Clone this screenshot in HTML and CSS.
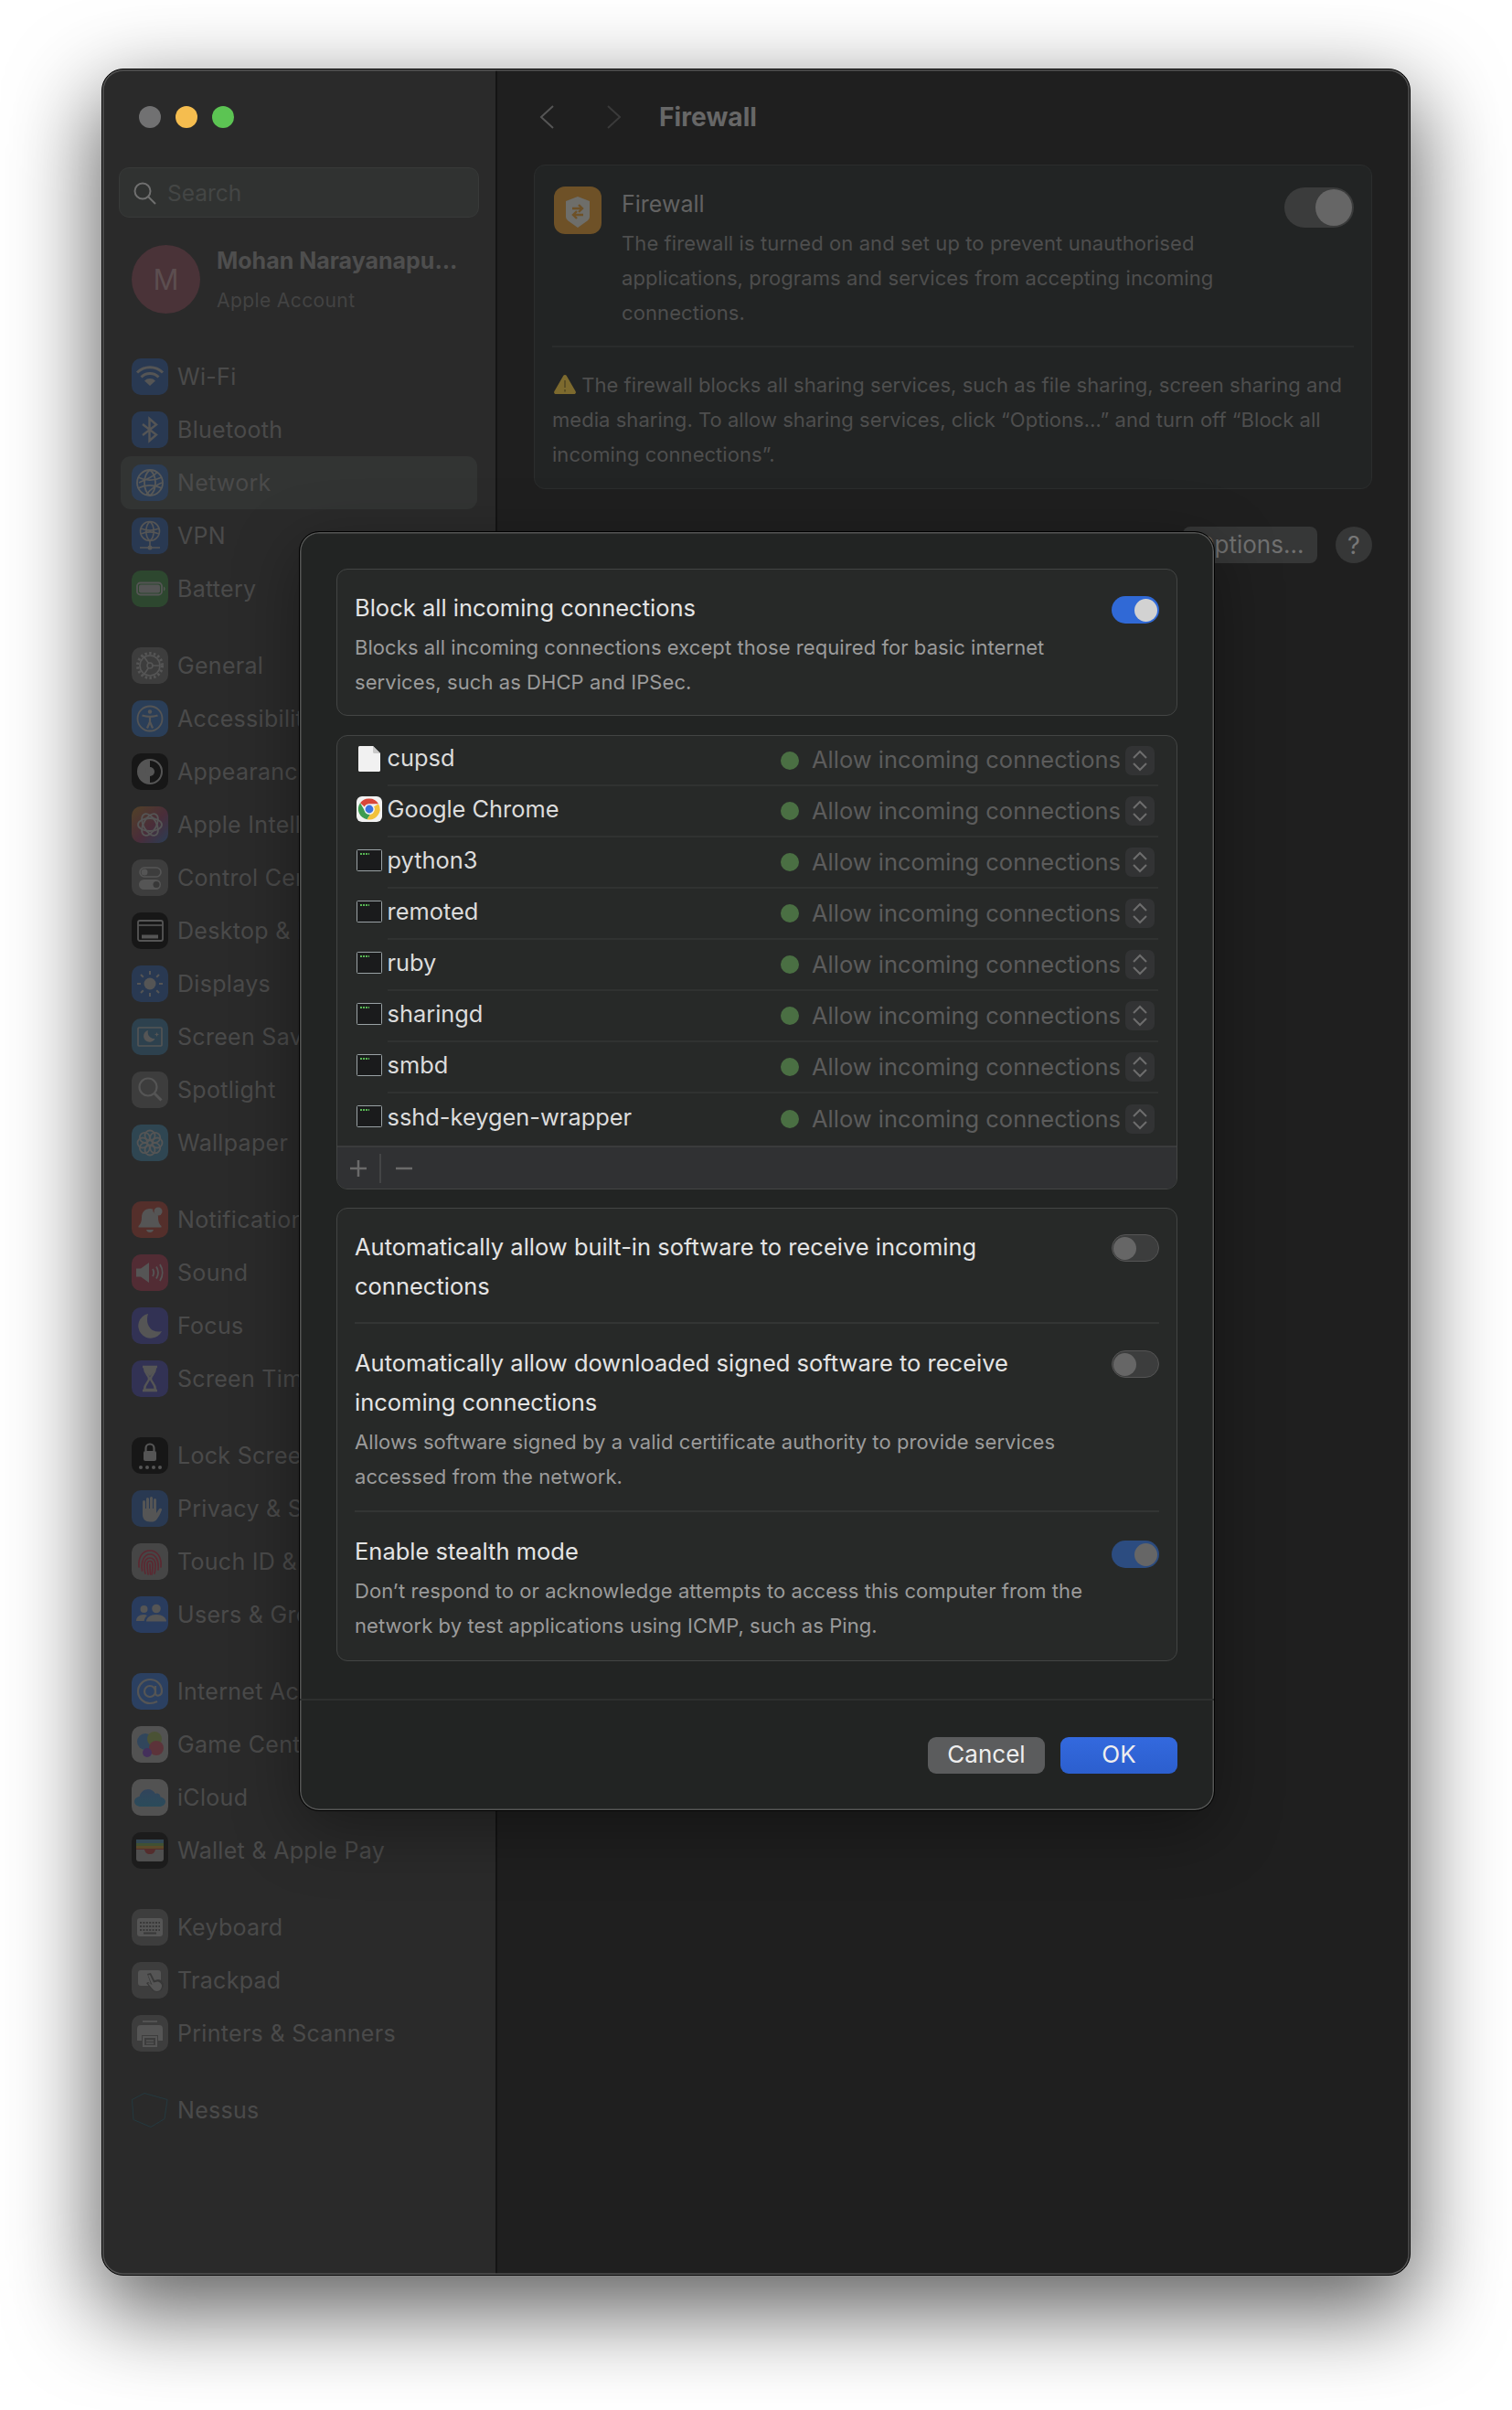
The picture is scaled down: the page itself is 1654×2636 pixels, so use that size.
FILE: index.html
```html
<!DOCTYPE html>
<html lang="en">
<head>
<meta charset="utf-8">
<title>Firewall</title>
<link rel="stylesheet" href="styles.css">
</head>
<body>
<div class="window">
  <aside class="sidebar">
    <div class="lights"><i class="light grey"></i><i class="light yellow"></i><i class="light green"></i></div>
    <div class="search">
      <svg class="search-ico" viewBox="0 0 26 26"><circle cx="11" cy="11" r="8.5"/><path d="M17 17l8 8"/></svg>
      <span>Search</span>
    </div>
    <div class="account">
      <div class="avatar">M</div>
      <div class="account-text"><div class="account-name">Mohan Narayanapu...</div><div class="account-sub">Apple Account</div></div>
    </div>

    <div class="group">
      <div class="item"><span class="ico c-blue"><svg viewBox="0 0 40 40"><g class="ln" stroke-width="3"><path d="M6 15.5a20 20 0 0 1 28 0"/><path d="M10.5 20.5a13.5 13.5 0 0 1 19 0"/></g><path class="fl" d="M20 30l-6-5.5a8.5 8.5 0 0 1 12 0z"/></svg></span>Wi-Fi</div>
      <div class="item"><span class="ico c-blue"><svg viewBox="0 0 40 40"><path class="ln" stroke-width="2.4" d="M12 14l15 11.5-7.500 6.500V8l7.500 6.500L12 26"/></svg></span>Bluetooth</div>
      <div class="item active"><span class="ico c-blue"><svg viewBox="0 0 40 40"><g class="ln" stroke-width="1.8"><circle cx="20" cy="20" r="14"/><path d="M20 6c-8 6-8 22 0 28M20 6c8 6 8 22 0 28"/><path d="M7 14c8 4 18 4 26 0M7 26c8-4 18-4 26 0M8 20c6-3 18-7 20-12M16 33c4-6 14-12 17-13"/></g></svg></span>Network</div>
      <div class="item"><span class="ico c-blue"><svg viewBox="0 0 40 40"><g class="ln" stroke-width="1.6"><circle cx="20" cy="15" r="10.500"/><path d="M20 4.500c-5.500 4-5.500 17 0 21M20 4.500c5.500 4 5.500 17 0 21M10 12c6 2.500 14 2.500 20 0M10 18c6-2.500 14-2.500 20 0"/><path d="M20 25.500V33M9 33h22"/></g><circle class="fl" cx="20" cy="33" r="2.500"/></svg></span>VPN</div>
      <div class="item"><span class="ico c-green"><svg viewBox="0 0 40 40"><rect class="ln" stroke-width="1.800" x="6" y="13.500" width="27" height="13" rx="3.500"/><rect class="fl" x="8" y="15.500" width="23" height="9" rx="2"/><path class="fl" d="M35 17.500v5c1-.5 1.500-1.500 1.500-2.500s-.5-2-1.500-2.500z"/></svg></span>Battery</div>
    </div>

    <div class="group">
      <div class="item"><span class="ico c-grey"><svg viewBox="0 0 40 40"><circle class="ln" stroke-width="3" stroke-dasharray="2.400 2.400" cx="20" cy="20" r="13.500"/><g class="ln" stroke-width="1.600"><circle cx="20" cy="20" r="11"/><circle cx="20" cy="20" r="3"/><path d="M23 20h8M18.500 17.500L13 9.500M18.500 22.500L13 30.500"/></g></svg></span>General</div>
      <div class="item"><span class="ico c-blue2"><svg viewBox="0 0 40 40"><circle class="ln" stroke-width="1.800" cx="20" cy="20" r="13.500"/><circle class="fl" cx="20" cy="12.500" r="2.200"/><path class="ln" stroke-width="2.200" d="M11.500 16.500c5 1.500 12 1.500 17 0M20 17.500v6M20 23.500l-3 7M20 23.500l3 7"/></svg></span>Accessibility</div>
      <div class="item"><span class="ico c-black"><svg viewBox="0 0 40 40"><circle class="ln" stroke-width="2" cx="20" cy="20" r="13"/><path class="fl" d="M20 7a13 13 0 0 0 0 26z"/><circle class="fl" cx="20" cy="20" r="5"/></svg></span>Appearance</div>
      <div class="item"><span class="ico c-ai"><svg viewBox="0 0 40 40"><g class="ln" stroke-width="1.800"><ellipse cx="20" cy="20" rx="13" ry="7"/><ellipse cx="20" cy="20" rx="13" ry="7" transform="rotate(60 20 20)"/><ellipse cx="20" cy="20" rx="13" ry="7" transform="rotate(120 20 20)"/></g></svg></span>Apple Intelligence</div>
      <div class="item"><span class="ico c-grey"><svg viewBox="0 0 40 40"><rect class="ln" stroke-width="1.600" x="9" y="9" width="23" height="10" rx="5"/><circle class="fl" cx="14" cy="14" r="3.500"/><rect class="fl" x="8" y="22" width="24" height="11" rx="5.500"/><circle cx="27" cy="27.500" r="3.500" fill="#414141"/></svg></span>Control Centre</div>
      <div class="item"><span class="ico c-black"><svg viewBox="0 0 40 40"><rect class="ln" stroke-width="1.800" x="7" y="9" width="27" height="22" rx="2"/><path class="ln" stroke-width="1.600" d="M7 14h27"/><rect class="fl" x="11" y="24.500" width="18" height="4"/></svg></span>Desktop &amp; Dock</div>
      <div class="item"><span class="ico c-blue"><svg viewBox="0 0 40 40"><circle class="fl" cx="20" cy="20" r="6.500"/><path class="ln" stroke-width="2" d="M20 6v4M20 30v4M6 20h4M30 20h4M10 10l2.800 2.800M27.200 27.200L30 30M10 30l2.800-2.800M27.200 12.800L30 10"/></svg></span>Displays</div>
      <div class="item"><span class="ico c-teal"><svg viewBox="0 0 40 40"><rect class="ln" stroke-width="1.600" x="7" y="10" width="26" height="20" rx="1"/><path class="fl" d="M18 13a6.500 6.500 0 1 0 7.500 9 7 7 0 0 1-7.500-9z"/><path class="fl" d="M27.500 15l.7 1.800 1.800.7-1.800.7-.7 1.800-.7-1.800-1.800-.7 1.800-.7z"/></svg></span>Screen Saver</div>
      <div class="item"><span class="ico c-grey"><svg viewBox="0 0 40 40"><circle class="ln" stroke-width="2.200" cx="18" cy="17" r="9.500"/><path class="ln" stroke-width="3" d="M25 24l7.500 7.500"/></svg></span>Spotlight</div>
      <div class="item"><span class="ico c-teal2"><svg viewBox="0 0 40 40"><g class="ln" stroke-width="1.800"><circle cx="20" cy="12" r="5.500"/><circle cx="20" cy="28" r="5.500"/><circle cx="12" cy="20" r="5.500"/><circle cx="28" cy="20" r="5.500"/><circle cx="14.300" cy="14.300" r="5.500"/><circle cx="25.700" cy="14.300" r="5.500"/><circle cx="14.300" cy="25.700" r="5.500"/><circle cx="25.700" cy="25.700" r="5.500"/></g></svg></span>Wallpaper</div>
    </div>

    <div class="group">
      <div class="item"><span class="ico c-red"><svg viewBox="0 0 40 40"><path class="fl" d="M20 8c-5.500 0-9 4-9 9.500 0 5-1.500 7.500-3.500 9.500v1.500h25V27c-2-2-3.500-4.500-3.500-9.500 0-1-.1-2-.4-2.800C24 13 22.500 10.500 23.500 8.800 22.400 8.300 21.200 8 20 8z"/><path class="fl" d="M16 31h8c-.5 2-2 3-4 3s-3.500-1-4-3z"/><circle class="fl" cx="29" cy="11" r="4.500"/></svg></span>Notifications</div>
      <div class="item"><span class="ico c-rose"><svg viewBox="0 0 40 40"><path class="fl" d="M5 15.500h5L19 9v22l-9-6.500H5z"/><path class="ln" stroke-width="1.800" d="M23 16c1.500 2.500 1.500 5.500 0 8M27 13.500c2.500 4 2.500 9 0 13M31 11c3.500 5.500 3.500 12.500 0 18"/></svg></span>Sound</div>
      <div class="item"><span class="ico c-indigo"><svg viewBox="0 0 40 40"><path class="fl" d="M18 7a13.500 13.500 0 1 0 15 19C22 29 14 19 18 7z"/></svg></span>Focus</div>
      <div class="item"><span class="ico c-indigo"><svg viewBox="0 0 40 40"><path class="ln" stroke-width="2.400" d="M12 7h16M12 33h16"/><path class="ln" stroke-width="2.400" d="M14 8c0 7 5 8 5 12s-5 5-5 12h12c0-7-5-8-5-12s5-5 5-12z"/><path class="fl" d="M14.500 9h11c-.5 4-3.500 6-5.500 8.500-2-2.500-5-4.500-5.500-8.500z"/></svg></span>Screen Time</div>
    </div>

    <div class="group">
      <div class="item"><span class="ico c-black"><svg viewBox="0 0 40 40"><path class="ln" stroke-width="2.200" d="M15.500 15v-3a4.500 4.500 0 0 1 9 0v3"/><rect class="fl" x="13" y="15" width="14" height="11" rx="2"/><circle class="fl" cx="10" cy="33" r="2"/><circle class="fl" cx="17" cy="33" r="2"/><circle class="fl" cx="24" cy="33" r="2"/><circle class="fl" cx="31" cy="33" r="2"/></svg></span>Lock Screen</div>
      <div class="item"><span class="ico c-blue"><svg viewBox="0 0 40 40"><path class="fl" d="M12 12.500a1.500 1.500 0 0 1 3 0V20h1V9.500a1.500 1.500 0 0 1 3 0V20h1V8.500a1.500 1.500 0 0 1 3 0V20h1v-9.500a1.500 1.500 0 0 1 3 0V25l3-4.500c1-1.500 3.500-.500 3 1-1.500 4-3.500 8-6 11-1.500 1.500-3 2-5 2h-2c-5 0-8-3-8-8z"/></svg></span>Privacy &amp; Security</div>
      <div class="item"><span class="ico c-touch"><svg viewBox="0 0 40 40"><g fill="none" stroke="#7a2836" stroke-width="1.700" stroke-linecap="round"><path d="M8 26c-1-11 4-18 12-18s13 7 12 18"/><path d="M11.500 30c-1.500-10 2-18 8.500-18s10 7 9 17"/><path d="M15 33c-1-2-1-5-1-10 0-4 2.500-7 6-7s6 3 6 7c0 4 0 7-1 10"/><path d="M18 34c-.5-4-1-7-1-11 0-2 1-3.500 3-3.500s3 1.500 3 3.500c0 4 0 8-1 11"/><path d="M20 23c0 4 .3 8 .5 11"/></g></svg></span>Touch ID &amp; Password</div>
      <div class="item"><span class="ico c-blue3"><svg viewBox="0 0 40 40"><circle class="fl" cx="13.500" cy="14" r="4"/><circle class="fl" cx="27" cy="13.500" r="4.800"/><path class="fl" d="M5 27c0-4 3-7 8-7 1.500 0 2.800.3 4 1-2 1.500-3 3.500-3.300 6z"/><path class="fl" d="M16 27.500c0-4 4.500-7.500 11-7.500s11 3.500 11 7.500z"/></svg></span>Users &amp; Groups</div>
    </div>

    <div class="group">
      <div class="item"><span class="ico c-blue4"><svg viewBox="0 0 40 40"><g class="ln" stroke-width="2.200"><circle cx="20" cy="20" r="6"/><path d="M26 14v8c0 4 7 3.500 7-2.500C33 12 27 7 20 7S7 13 7 20s6 13 13 13c3 0 5.500-.7 8-2"/></g></svg></span>Internet Accounts</div>
      <div class="item"><span class="ico c-light"><svg viewBox="0 0 40 40"><circle cx="15" cy="17" r="9" fill="#36587c"/><circle cx="25" cy="14" r="8" fill="#5f6b3c"/><circle cx="27" cy="24" r="8" fill="#7c3a44"/><circle cx="17" cy="29" r="5" fill="#54357a"/></svg></span>Game Center</div>
      <div class="item"><span class="ico c-light"><svg viewBox="0 0 40 40"><defs><linearGradient id="cloudfill" x1="0" y1="0" x2="0" y2="1"><stop offset="0" stop-color="#37557a"/><stop offset="1" stop-color="#2c6078"/></linearGradient></defs><path fill="url(#cloudfill)" d="M10 30c-4 0-7-2.500-7-5.500 0-3 2.500-5 5.500-5.500 1-4.500 5-8 9.500-8 3.500 0 6.500 2 8 5 1-.5 2-.5 3-.2 1.500.5 2.500 2 2.500 3.700 3 .5 5.500 2.500 5.500 5 0 3-3 5.500-6.500 5.500z"/></svg></span>iCloud</div>
      <div class="item"><span class="ico c-black2"><svg viewBox="0 0 40 40"><rect x="5" y="8" width="30" height="24" rx="3" fill="#666"/><rect x="5" y="8" width="30" height="4" fill="#3a5a6e"/><rect x="5" y="12" width="30" height="3" fill="#4f6a3a"/><rect x="5" y="15" width="30" height="3" fill="#7a5f2a"/><path d="M5 18h30v1H26c-1 4-3 5-6 5s-5-1-6-5H5z" fill="#6e2f2f"/></svg></span>Wallet &amp; Apple Pay</div>
    </div>

    <div class="group">
      <div class="item"><span class="ico c-grey"><svg viewBox="0 0 40 40"><rect class="fl" x="6" y="10" width="28" height="20" rx="3"/><g stroke="#414141" stroke-width="2" stroke-dasharray="2 1.400"><path d="M9 15h22M9 19h22M9 23h22"/></g><rect x="13" y="25.500" width="14" height="2" fill="#414141"/></svg></span>Keyboard</div>
      <div class="item"><span class="ico c-grey"><svg viewBox="0 0 40 40"><rect class="fl" x="7" y="9" width="25" height="17" rx="3"/><path d="M17 13l4-1 4 8 4-1c3 0 6 3 6 6 0 4-3 8-7 8-3 0-5-1-7-4l-5-6 2-1 3 2z" fill="#414141"/><path class="fl" d="M18 14.500l2-.5 4 8.500 4-1c2 0 5 2 5 4.500 0 3-2.500 6-5 6-2.500 0-4-1-6-3.500l-4-5 1-.5 3.500 2z"/></svg></span>Trackpad</div>
      <div class="item"><span class="ico c-grey"><svg viewBox="0 0 40 40"><path class="ln" stroke-width="1.800" d="M12 7h16"/><path class="fl" d="M10 11h20a4 4 0 0 1 4 4v13h-5v-6H11v6H6V15a4 4 0 0 1 4-4z"/><rect class="ln" stroke-width="2" x="13" y="24" width="14" height="10"/><path class="ln" stroke-width="1.600" d="M16 28h8M16 31h8"/></svg></span>Printers &amp; Scanners</div>
    </div>

    <div class="group">
      <div class="item"><span class="ico c-none"><svg viewBox="0 0 40 40"><path fill="none" stroke="#243a40" stroke-width="1" d="M14 1.500l25 7 -3 21-15 9-19-8-1.500-22z"/></svg></span>Nessus</div>
    </div>
  </aside>

  <main class="main">
    <header class="toolbar">
      <svg class="chev back" viewBox="0 0 18 28"><path d="M16 2L3 14l13 12"/></svg>
      <svg class="chev fwd" viewBox="0 0 18 28"><path d="M2 2l13 12L2 26"/></svg>
      <h1 class="toolbar-title">Firewall</h1>
    </header>

    <section class="fw-card">
      <div class="fw-top">
        <span class="fw-icon"><svg viewBox="0 0 52 52"><path fill="#6e6e6a" d="M26 11l13 5v17c0 2-1 3-2.500 4.500L26 45 15.500 37.500C14 36 13 35 13 33V16z"/><path fill="none" stroke="#6e5127" stroke-width="2.400" d="M20 24h11M27 20l4 4-4 4M32 31H21M25 27l-4 4 4 4"/></svg></span>
        <div class="fw-text">
          <div class="fw-label">Firewall</div>
          <p class="fw-desc">The firewall is turned on and set up to prevent unauthorised<br>applications, programs and services from accepting incoming<br>connections.</p>
        </div>
        <span class="fw-toggle"><i></i></span>
      </div>
      <div class="fw-warn"><svg class="warn-ico" viewBox="0 0 24 21"><path fill="#7d6a2e" d="M12 0c.8 0 1.400.4 1.800 1.100l9.800 17c.8 1.400-.1 2.900-1.700 2.900H2.100C.5 21-.4 19.500.4 18.100l9.800-17C10.600.4 11.200 0 12 0z"/><path stroke="#5c4f25" stroke-width="2" d="M12 6v8M12 16v2.500"/></svg> The firewall blocks all sharing services, such as file sharing, screen sharing and<br>media sharing. To allow sharing services, click “Options…” and turn off “Block all<br>incoming connections”.</div>
    </section>

    <div class="actions">
      <span class="options-btn">Options…</span>
      <span class="help-btn">?</span>
    </div>
  </main>

  <div class="dialog">
    <section class="card block-card">
      <div class="setting">
        <div class="setting-text">
          <div class="s-title">Block all incoming connections</div>
          <p class="s-desc">Blocks all incoming connections except those required for basic internet<br>services, such as DHCP and IPSec.</p>
        </div>
        <span class="toggle on"><i></i></span>
      </div>
    </section>

    <section class="card list-card">
      <div class="app"><span class="app-ico"><svg class="doc" viewBox="0 0 24 28"><path fill="#f1f1f1" d="M1.500 0H16l8 8v18.500c0 .8-.7 1.500-1.500 1.500h-21C.7 28 0 27.300 0 26.500v-25C0 .7.700 0 1.500 0z"/><path fill="#c9c9c9" d="M16 0l8 8h-6.500c-.8 0-1.500-.7-1.500-1.500z"/></svg></span><div class="app-body"><span class="app-name">cupsd</span><i class="dot"></i><span class="allow">Allow incoming connections</span><span class="stepper"><svg viewBox="0 0 32 32"><path d="M9 13l7-7 7 7M9 19l7 7 7-7"/></svg></span></div></div>
      <div class="app"><span class="app-ico"><svg class="chrome" viewBox="0 0 28 28"><rect width="28" height="28" rx="6" fill="#f2f2f2"/><path fill="#d9473a" d="M14 2.500a11.500 11.500 0 0 1 10 5.750H14a5.750 5.750 0 0 0-5.200 3.300L4 7.200A11.500 11.500 0 0 1 14 2.500z"/><path fill="#3d9c50" d="M4 7.200l4.800 8.300a5.750 5.750 0 0 0 6.300 4.150L11.500 25.200A11.500 11.500 0 0 1 4 7.200z"/><path fill="#f2c23c" d="M24 8.250a11.500 11.500 0 0 1-12.500 16.950l3.600-5.550a5.750 5.750 0 0 0 3.900-8.500z"/><circle cx="14" cy="14" r="5.600" fill="#f2f2f2"/><circle cx="14" cy="14" r="4.400" fill="#3a72e0"/></svg></span><div class="app-body"><span class="app-name">Google Chrome</span><i class="dot"></i><span class="allow">Allow incoming connections</span><span class="stepper"><svg viewBox="0 0 32 32"><path d="M9 13l7-7 7 7M9 19l7 7 7-7"/></svg></span></div></div>
      <div class="app"><span class="app-ico"><svg class="term" viewBox="0 0 28 24"><rect x=".5" y=".5" width="27" height="23" rx="1" fill="#1a1b1c" stroke="#9aa2a5" stroke-width="1"/><path fill="none" stroke="#58b854" stroke-width="2" stroke-dasharray="2 1" d="M4 5h10"/></svg></span><div class="app-body"><span class="app-name">python3</span><i class="dot"></i><span class="allow">Allow incoming connections</span><span class="stepper"><svg viewBox="0 0 32 32"><path d="M9 13l7-7 7 7M9 19l7 7 7-7"/></svg></span></div></div>
      <div class="app"><span class="app-ico"><svg class="term" viewBox="0 0 28 24"><rect x=".5" y=".5" width="27" height="23" rx="1" fill="#1a1b1c" stroke="#9aa2a5" stroke-width="1"/><path fill="none" stroke="#58b854" stroke-width="2" stroke-dasharray="2 1" d="M4 5h10"/></svg></span><div class="app-body"><span class="app-name">remoted</span><i class="dot"></i><span class="allow">Allow incoming connections</span><span class="stepper"><svg viewBox="0 0 32 32"><path d="M9 13l7-7 7 7M9 19l7 7 7-7"/></svg></span></div></div>
      <div class="app"><span class="app-ico"><svg class="term" viewBox="0 0 28 24"><rect x=".5" y=".5" width="27" height="23" rx="1" fill="#1a1b1c" stroke="#9aa2a5" stroke-width="1"/><path fill="none" stroke="#58b854" stroke-width="2" stroke-dasharray="2 1" d="M4 5h10"/></svg></span><div class="app-body"><span class="app-name">ruby</span><i class="dot"></i><span class="allow">Allow incoming connections</span><span class="stepper"><svg viewBox="0 0 32 32"><path d="M9 13l7-7 7 7M9 19l7 7 7-7"/></svg></span></div></div>
      <div class="app"><span class="app-ico"><svg class="term" viewBox="0 0 28 24"><rect x=".5" y=".5" width="27" height="23" rx="1" fill="#1a1b1c" stroke="#9aa2a5" stroke-width="1"/><path fill="none" stroke="#58b854" stroke-width="2" stroke-dasharray="2 1" d="M4 5h10"/></svg></span><div class="app-body"><span class="app-name">sharingd</span><i class="dot"></i><span class="allow">Allow incoming connections</span><span class="stepper"><svg viewBox="0 0 32 32"><path d="M9 13l7-7 7 7M9 19l7 7 7-7"/></svg></span></div></div>
      <div class="app"><span class="app-ico"><svg class="term" viewBox="0 0 28 24"><rect x=".5" y=".5" width="27" height="23" rx="1" fill="#1a1b1c" stroke="#9aa2a5" stroke-width="1"/><path fill="none" stroke="#58b854" stroke-width="2" stroke-dasharray="2 1" d="M4 5h10"/></svg></span><div class="app-body"><span class="app-name">smbd</span><i class="dot"></i><span class="allow">Allow incoming connections</span><span class="stepper"><svg viewBox="0 0 32 32"><path d="M9 13l7-7 7 7M9 19l7 7 7-7"/></svg></span></div></div>
      <div class="app last"><span class="app-ico"><svg class="term" viewBox="0 0 28 24"><rect x=".5" y=".5" width="27" height="23" rx="1" fill="#1a1b1c" stroke="#9aa2a5" stroke-width="1"/><path fill="none" stroke="#58b854" stroke-width="2" stroke-dasharray="2 1" d="M4 5h10"/></svg></span><div class="app-body"><span class="app-name">sshd-keygen-wrapper</span><i class="dot"></i><span class="allow">Allow incoming connections</span><span class="stepper"><svg viewBox="0 0 32 32"><path d="M9 13l7-7 7 7M9 19l7 7 7-7"/></svg></span></div></div>
      <div class="list-foot">
        <svg class="foot-ico" viewBox="0 0 20 20"><path d="M10 1v18M1 10h18"/></svg>
        <i class="foot-sep"></i>
        <svg class="foot-ico" viewBox="0 0 20 20"><path d="M1 10h18"/></svg>
      </div>
    </section>

    <section class="card settings-card">
      <div class="setting row-a">
        <div class="setting-text"><div class="s-title">Automatically allow built-in software to receive incoming<br>connections</div></div>
        <span class="toggle off"><i></i></span>
      </div>
      <div class="setting row-b">
        <div class="setting-text">
          <div class="s-title">Automatically allow downloaded signed software to receive<br>incoming connections</div>
          <p class="s-desc">Allows software signed by a valid certificate authority to provide services<br>accessed from the network.</p>
        </div>
        <span class="toggle off"><i></i></span>
      </div>
      <div class="setting row-c">
        <div class="setting-text">
          <div class="s-title">Enable stealth mode</div>
          <p class="s-desc">Don’t respond to or acknowledge attempts to access this computer from the<br>network by test applications using ICMP, such as Ping.</p>
        </div>
        <span class="toggle dim"><i></i></span>
      </div>
    </section>

    <footer class="dialog-foot">
      <button class="btn cancel">Cancel</button>
      <button class="btn ok">OK</button>
    </footer>
  </div>
</div>
</body>
</html>
```

FILE: styles.css
```css
* { box-sizing: border-box; }
html, body { margin: 0; background: #fff; }
body {
  width: 1654px;
  height: 2636px;
  padding: 75px 0 0 111px;
  font-family: Inter, "Liberation Sans", sans-serif;
  overflow: hidden;
}
.window {
  position: relative;
  display: flex;
  width: 1432px;
  height: 2414px;
  border: 1px solid #000;
  border-radius: 24px;
  background: #1f1f1f;
  box-shadow: 0 34px 95px 6px rgba(0,0,0,.62);
  overflow: hidden;
}
.window::after {
  content: "";
  position: absolute;
  inset: 0;
  border-radius: 23px;
  box-shadow: inset 0 0 0 1.5px #565656;
  pointer-events: none;
}

/* sidebar */
.sidebar {
  flex: 0 0 432px;
  padding: 0 20px;
  background: #2a2a2a;
  border-right: 2px solid #141414;
  color: #4a4a4a;
  white-space: nowrap;
  overflow: hidden;
}
.lights { display: flex; gap: 16px; height: 107px; padding: 40px 0 0 20px; }
.light { width: 24px; height: 24px; border-radius: 50%; }
.grey { background: #717172; }
.yellow { background: #f5bd4f; }
.green { background: #5cc453; }
.search {
  display: flex;
  align-items: center;
  gap: 12px;
  width: 394px;
  height: 55px;
  margin-left: -2px;
  padding-left: 14px;
  border: 1px solid #383a39;
  border-radius: 11px;
  background: #303231;
  font-size: 24.500px;
  color: #444645;
}
.search-ico { width: 26px; height: 26px; fill: none; stroke: #6f6f6f; stroke-width: 2; }
.account { display: flex; align-items: center; gap: 18px; height: 75px; margin-top: 30px; padding-left: 12px; }
.avatar {
  display: flex; align-items: center; justify-content: center;
  flex: none;
  width: 75px; height: 75px;
  border-radius: 50%;
  background: #4a3338;
  color: #5c4e50;
  font-size: 31px;
}
.account-name { font-size: 25px; font-weight: 700; color: #4e4e4e; line-height: 30px; margin-top: 0; }
.account-sub { font-size: 21px; letter-spacing: .4px; color: #434343; line-height: 26px; margin-top: 16px; }
.group { margin-top: 26px; }
.account + .group { margin-top: 40px; }
.item {
  display: flex;
  align-items: center;
  gap: 10px;
  height: 58px;
  padding-left: 12px;
  border-radius: 11px;
  font-size: 25px;
  letter-spacing: .3px;
}
.item.active { background: #323433; }
.ico { flex: none; width: 40px; height: 40px; border-radius: 10px; opacity: .62; }
.ico svg { display: block; width: 40px; height: 40px; }
.ln { fill: none; stroke: #707070; }
.fl { fill: #707070; }
.c-blue { background: #29436b; }
.c-blue2 { background: #2b4b75; }
.c-blue3 { background: #29477f; }
.c-blue4 { background: #2c4f83; }
.c-green { background: #2f5a33; }
.c-grey { background: #4a4a4a; }
.c-black { background: #0c0c0c; }
.c-black2 { background: #141414; }
.c-ai { background: linear-gradient(135deg, #6b5026 0%, #5d2f44 55%, #2b4a6f 100%); }
.c-teal { background: #2f5064; }
.c-teal2 { background: #33586c; }
.c-red { background: #6e332d; }
.c-rose { background: #6c2e3b; }
.c-indigo { background: #38386e; }
.c-touch { background: #585858; }
.c-light { background: #6c6c6c; }
.c-none { background: none; opacity: 1; }

/* main pane behind the sheet */
.main { flex: 1; padding: 0 41px 0 40px; color: #4e4e4e; }
.toolbar { position: relative; display: flex; align-items: center; height: 104px; }
.chev { width: 18px; height: 28px; fill: none; stroke-width: 2; }
.back { margin-left: 5px; stroke: #555; }
.fwd { margin-left: 56px; stroke: #3a3a3a; }
.toolbar-title { margin: 0 0 0 40px; font-size: 28.200px; line-height: 36px; font-weight: 700; color: #676767; }
.fw-card {
  height: 355px;
  padding: 23px 19px 0;
  border: 1px solid #2b2d2d;
  border-radius: 12px;
  background: #222424;
  font-size: 22px;
  line-height: 38px;
}
.fw-top { display: flex; height: 176px; border-bottom: 2px solid #2a2c2c; padding-left: 2px; }
.fw-icon { flex: none; width: 52px; height: 52px; border-radius: 12px; background: #6e5127; }
.fw-icon svg { display: block; width: 52px; height: 52px; }
.fw-text { flex: 1; margin-left: 22px; }
.fw-label { font-size: 25px; color: #626262; }
.fw-desc { margin: 5px 0 0; letter-spacing: .1px; }
.fw-toggle { position: relative; flex: none; width: 76px; height: 44px; margin-top: 1px; border-radius: 22px; background: #3b3c3c; }
.fw-toggle i { position: absolute; right: 2px; top: 2px; width: 40px; height: 40px; border-radius: 50%; background: #666; }
.fw-warn { margin-top: 22px; letter-spacing: .04px; }
.warn-ico { width: 24px; height: 21px; vertical-align: -2px; margin-left: 2px; }
.actions { display: flex; justify-content: flex-end; align-items: center; gap: 20px; margin-top: 41px; }
.options-btn { display: flex; align-items: center; justify-content: center; width: 147px; height: 40px; padding-bottom: 2px; border-radius: 8px; background: #363737; color: #707070; font-size: 26px; }
.help-btn { display: flex; align-items: center; justify-content: center; width: 40px; height: 40px; border-radius: 50%; background: #363737; color: #777; font-size: 27px; }

/* sheet */
.dialog {
  position: absolute;
  left: 215px;
  top: 505px;
  width: 1002px;
  height: 1400px;
  padding: 40px 40px 0;
  border: 1px solid #000;
  border-radius: 22px;
  background: #222423;
  box-shadow: inset 0 0 0 1.500px #545554, 0 20px 70px rgba(0,0,0,.35);
  color: #e4e4e4;
}
.card {
  border: 1.500px solid #434544;
  border-radius: 12px;
  background: #272928;
  overflow: hidden;
}
.block-card { height: 161px; padding: 0 19px; }
.list-card { height: 497px; margin-top: 21px; display: flex; flex-direction: column; }
.settings-card { height: 496px; margin-top: 20px; padding: 0 19px; }
.setting { display: flex; justify-content: space-between; align-items: flex-start; }
.s-title { font-size: 25.500px; line-height: 43px; white-space: nowrap; }
.s-desc { margin: 3px 0 0; font-size: 22px; letter-spacing: .07px; line-height: 38px; color: #9b9b9b; white-space: nowrap; }
.block-card .setting { padding-top: 20px; }
.block-card .toggle { margin-top: 9px; }
.row-a { height: 126px; padding-top: 20px; border-bottom: 2px solid #333534; }
.row-b { height: 206px; padding-top: 21px; border-bottom: 2px solid #333534; }
.row-c { padding-top: 21px; }
.row-a .toggle, .row-b .toggle { margin-top: 8px; }
.row-c .toggle { margin-top: 10px; }
.toggle { position: relative; flex: none; width: 52px; height: 30px; border-radius: 15px; }
.toggle i { position: absolute; right: 2.500px; top: 2.500px; width: 25px; height: 25px; border-radius: 50%; }
.toggle.on { background: #3069d6; }
.toggle.on i { background: #d2d2d2; }
.toggle.off { background: #3c3d3d; border: 1px solid #555; }
.toggle.off i { left: 1px; right: auto; top: 1.500px; background: #666; }
.toggle.dim { background: #2c4c80; }
.toggle.dim i { background: #666; }

.app { display: flex; flex: none; height: 56px; padding-left: 20.500px; }
.app:first-child { height: 55px; }
.app-ico { display: flex; justify-content: center; align-items: center; flex: none; width: 28px; height: 50px; margin-right: 6px; }
.doc { width: 24px; height: 28px; }
.chrome { width: 28px; height: 28px; }
.term { width: 28px; height: 24px; }
.app-body { display: flex; align-items: center; flex: 1; margin-right: 20px; padding-right: 4px; border-bottom: 2px solid #303231; }
.last .app-body { border-bottom: 0; }
.app-name { flex: 1; margin-top: -6px; font-size: 25.400px; color: #dcdcdc; white-space: nowrap; }
.dot { flex: none; width: 20px; height: 20px; margin-left: 1px; border-radius: 50%; background: #4a6f43; }
.allow { flex: none; width: 336px; margin: -2px 0 0 14px; font-size: 25.500px; color: #5c5c5c; white-space: nowrap; }
.stepper { flex: none; width: 32px; height: 32px; margin-left: 7px; border-radius: 7px; background: #323334; }
.stepper svg { display: block; width: 32px; height: 32px; fill: none; stroke: #6d6d6d; stroke-width: 2; }
.list-foot { display: flex; align-items: center; flex: 1; margin-top: 1px; padding-left: 13px; border-top: 2px solid #3a3b3c; background: #303133; }
.foot-ico { width: 20px; height: 20px; fill: none; stroke: #6a6a6a; stroke-width: 2.500; }
.foot-sep { width: 2px; height: 32px; margin: 0 15px 0 13px; background: #444546; }

.dialog-foot {
  display: flex;
  justify-content: flex-end;
  gap: 17px;
  margin: 41px -40px 0;
  padding: 40px 40px 0;
  border-top: 2px solid #2e302f;
}
.btn {
  width: 128px;
  height: 40px;
  padding: 0 0 3px;
  border: 0;
  border-radius: 9px;
  font: 26px Inter, "Liberation Sans", sans-serif;
  color: #eee;
}
.cancel { background: #5b5c5d; }
.ok { background: linear-gradient(#3369de, #2c5fce); }
```
